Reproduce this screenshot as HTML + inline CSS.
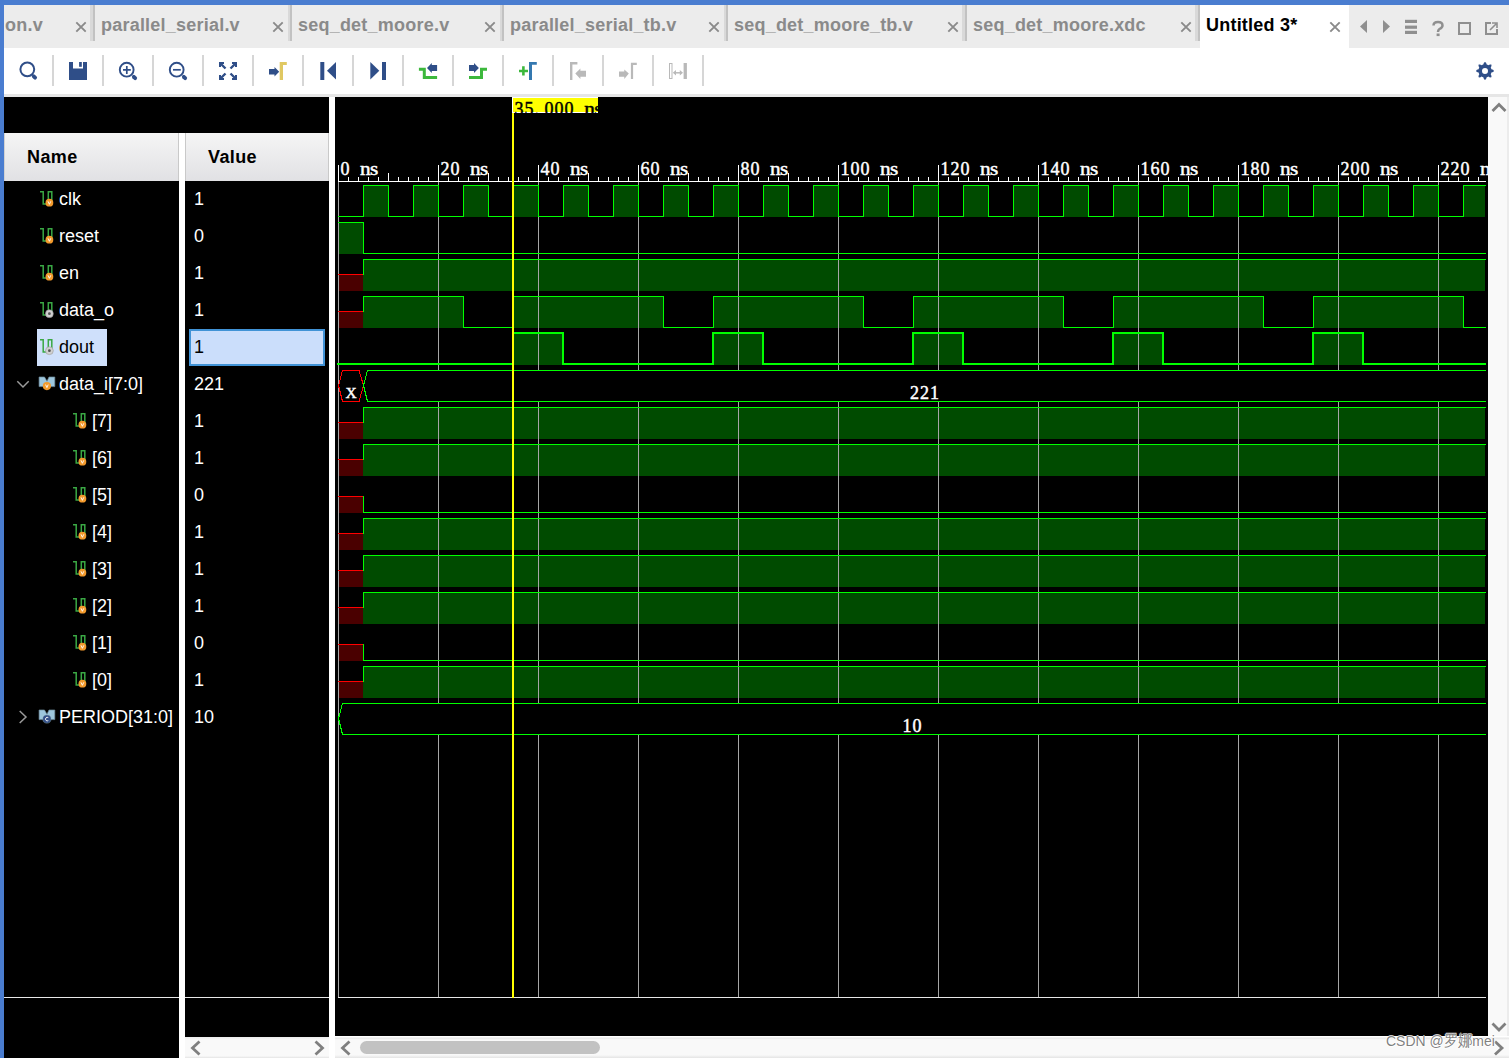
<!DOCTYPE html><html><head><meta charset="utf-8"><style>
*{margin:0;padding:0;box-sizing:border-box}
html,body{width:1509px;height:1058px;overflow:hidden;background:#4a7dd0}
body{position:relative;font-family:"Liberation Sans",sans-serif}
.a{position:absolute}
.tab{position:absolute;top:5px;height:43px;font-weight:bold;font-size:18px;letter-spacing:0.22px;color:#8a8a8a;white-space:nowrap}
.sep{position:absolute;top:5px;height:36px}
.tsep{position:absolute;top:55px;width:2px;height:31px;background:#d6d6d6}
.nm{position:absolute;color:#fff;font-size:18px;white-space:nowrap;line-height:20px}
.vl{position:absolute;left:194px;color:#fff;font-size:18px;white-space:nowrap;line-height:20px}
</style></head><body>
<div class="a" style="left:4px;top:5px;width:1505px;height:43px;background:#ececec"></div>
<div class="a" style="left:1200px;top:5px;width:149px;height:43px;background:#fff"></div>
<div class="tab" style="left:5px;line-height:40px">on.v</div>
<svg class="a" style="left:75px;top:21px" width="12" height="12"><path d="M1.3 1.3L10.7 10.7M10.7 1.3L1.3 10.7" stroke="#8a8a8a" stroke-width="1.9"/></svg>
<div class="sep" style="left:90px;width:5px;background:linear-gradient(90deg,#d9d9d9 3px,#c2c2c2 3px)"></div>
<div class="tab" style="left:101px;line-height:40px">parallel_serial.v</div>
<svg class="a" style="left:272px;top:21px" width="12" height="12"><path d="M1.3 1.3L10.7 10.7M10.7 1.3L1.3 10.7" stroke="#8a8a8a" stroke-width="1.9"/></svg>
<div class="sep" style="left:288px;width:4px;background:linear-gradient(90deg,#d9d9d9 2px,#c2c2c2 2px)"></div>
<div class="tab" style="left:298px;line-height:40px">seq_det_moore.v</div>
<svg class="a" style="left:484px;top:21px" width="12" height="12"><path d="M1.3 1.3L10.7 10.7M10.7 1.3L1.3 10.7" stroke="#8a8a8a" stroke-width="1.9"/></svg>
<div class="sep" style="left:500px;width:4px;background:linear-gradient(90deg,#d9d9d9 2px,#c2c2c2 2px)"></div>
<div class="tab" style="left:510px;line-height:40px">parallel_serial_tb.v</div>
<svg class="a" style="left:708px;top:21px" width="12" height="12"><path d="M1.3 1.3L10.7 10.7M10.7 1.3L1.3 10.7" stroke="#8a8a8a" stroke-width="1.9"/></svg>
<div class="sep" style="left:724px;width:4px;background:linear-gradient(90deg,#d9d9d9 2px,#c2c2c2 2px)"></div>
<div class="tab" style="left:734px;line-height:40px">seq_det_moore_tb.v</div>
<svg class="a" style="left:947px;top:21px" width="12" height="12"><path d="M1.3 1.3L10.7 10.7M10.7 1.3L1.3 10.7" stroke="#8a8a8a" stroke-width="1.9"/></svg>
<div class="sep" style="left:962px;width:5px;background:linear-gradient(90deg,#d9d9d9 3px,#c2c2c2 3px)"></div>
<div class="tab" style="left:973px;line-height:40px">seq_det_moore.xdc</div>
<svg class="a" style="left:1180px;top:21px" width="12" height="12"><path d="M1.3 1.3L10.7 10.7M10.7 1.3L1.3 10.7" stroke="#8a8a8a" stroke-width="1.9"/></svg>
<div class="sep" style="left:1195px;width:5px;background:linear-gradient(90deg,#d9d9d9 3px,#c2c2c2 3px)"></div>
<div class="tab" style="left:1206px;line-height:40px;color:#000">Untitled 3*</div>
<svg class="a" style="left:1329px;top:21px" width="12" height="12"><path d="M1.3 1.3L10.7 10.7M10.7 1.3L1.3 10.7" stroke="#8a8a8a" stroke-width="1.9"/></svg>
<svg class="a" style="left:1350px;top:5px" width="159" height="43"><path d="M17 15L10 21.5L17 28Z" fill="#8f8f8f"/><path d="M33 15L40 21.5L33 28Z" fill="#8f8f8f"/><rect x="55" y="14.8" width="12" height="3.2" fill="#8f8f8f"/><rect x="55" y="20.6" width="12" height="3.2" fill="#8f8f8f"/><rect x="55" y="25.8" width="12" height="3.2" fill="#8f8f8f"/><path d="M83.5 20.5Q83.5 17 88 17Q92.5 17 92.5 20.5Q92.5 22.5 89.5 24Q88 25 88 27" stroke="#8f8f8f" stroke-width="2.5" fill="none"/><rect x="86.6" y="28.5" width="3" height="2.6" fill="#8f8f8f"/><rect x="109" y="18" width="11" height="11" stroke="#8f8f8f" stroke-width="2" fill="none"/><path d="M141 18H136V29H147V24" stroke="#8f8f8f" stroke-width="2" fill="none"/><path d="M140 25L146 19M142 18H147V23" stroke="#8f8f8f" stroke-width="1.6" fill="none"/></svg>
<div class="a" style="left:4px;top:48px;width:1505px;height:46px;background:#fff"></div>
<div class="a" style="left:4px;top:94px;width:1505px;height:3px;background:#e6e6e6"></div>
<div class="tsep" style="left:52px"></div>
<div class="tsep" style="left:102px"></div>
<div class="tsep" style="left:152px"></div>
<div class="tsep" style="left:202px"></div>
<div class="tsep" style="left:252px"></div>
<div class="tsep" style="left:302px"></div>
<div class="tsep" style="left:352px"></div>
<div class="tsep" style="left:402px"></div>
<div class="tsep" style="left:452px"></div>
<div class="tsep" style="left:502px"></div>
<div class="tsep" style="left:552px"></div>
<div class="tsep" style="left:602px"></div>
<div class="tsep" style="left:652px"></div>
<div class="tsep" style="left:702px"></div>
<svg class="a" style="left:0;top:0" width="1509" height="97"><circle cx="27.3" cy="69.3" r="6.9" stroke="#2f4e88" stroke-width="2" fill="none"/><path d="M33.7 76.3L35.1 77.7" stroke="#2f4e88" stroke-width="3.8" stroke-linecap="round"/><path d="M69 62H73V68.6H83V62H87V80H69Z" fill="#2f4e88"/><rect x="79.1" y="62" width="2.7" height="4.8" fill="#2f4e88"/><circle cx="126.7" cy="69.7" r="6.9" stroke="#2f4e88" stroke-width="1.9" fill="none"/><path d="M123 69.8H130.8M126.8 66V73.9" stroke="#2f4e88" stroke-width="1.7"/><path d="M133.8 76.8L135.2 78.2" stroke="#2f4e88" stroke-width="3.8" stroke-linecap="round"/><circle cx="176.7" cy="69.7" r="6.9" stroke="#2f4e88" stroke-width="1.9" fill="none"/><path d="M173 69.8H180.8" stroke="#2f4e88" stroke-width="1.7"/><path d="M183.8 76.8L185.2 78.2" stroke="#2f4e88" stroke-width="3.8" stroke-linecap="round"/><g fill="#2f4e88"><path d="M219 62H224V64H221V67H219Z"/><path d="M237 62H232V64H235V67H237Z"/><path d="M219 80H224V78H221V75H219Z"/><path d="M237 80H232V78H235V75H237Z"/></g><path d="M220.5 63.5L225.5 68.5M235.5 63.5L230.5 68.5M220.5 78.5L225.5 73.5M235.5 78.5L230.5 73.5" stroke="#2f4e88" stroke-width="2.4"/><path d="M269 69H274.5V67L279.2 71.7L274.5 76.5V74.6H269Z" fill="#2f4e88"/><path d="M279.7 62H286.8V65H283V80H279.7Z" fill="#e0c862"/><rect x="320.3" y="62" width="4" height="18" fill="#2f4e88"/><path d="M336 62V79.5L327 70.8Z" fill="#2f4e88"/><rect x="382" y="62" width="4" height="18" fill="#2f4e88"/><path d="M370.3 62V79.5L379.3 70.8Z" fill="#2f4e88"/><path d="M418.9 67.8H425.8V75.9H437.1V78.9H422.8V70.8H418.9Z" fill="#3cb83c"/><path d="M427 67.9L431.8 63V65.1H437.1V71H431.8V72.9Z" fill="#2f4e88"/><path d="M487 67.8H480V75.9H469V78.9H483V70.8H487Z" fill="#3cb83c"/><path d="M478.9 67.9L474 63V65.1H469V71H474V72.9Z" fill="#2f4e88"/><path d="M519 71H528M523.4 66.3V75.6" stroke="#3cb83c" stroke-width="2.6"/><path d="M529 62H536.8V64.8H532V80H529Z" fill="#3478b0"/><path d="M570 62H577.4V64.6H572.4V80H570Z" fill="#b9b9b9"/><path d="M575.3 73.5L580.4 68.4V70.8H586V76.8H580.4V78.9Z" fill="#b9b9b9"/><path d="M630.9 62.8H636.8V65H633.1V79.1H630.9Z" fill="#b9b9b9"/><path d="M628.8 73.6L624.3 69.6V71.4H619V76.8H624.3V78.9Z" fill="#b9b9b9"/><rect x="669.5" y="63.5" width="2.5" height="15" stroke="#b9b9b9" stroke-width="1" fill="none"/><rect x="683.6" y="63" width="3.3" height="16" fill="#b9b9b9"/><path d="M675 72.8H681" stroke="#b9b9b9" stroke-width="1.5"/><path d="M672.8 72.8L676 70V75.6Z M683 72.8L679.8 70V75.6Z" fill="#b9b9b9"/><path d="M1485.00,61.90 L1486.07,62.77 L1486.71,64.52 L1487.53,64.80 L1488.30,65.18 L1489.99,64.39 L1491.36,64.54 L1491.51,65.91 L1490.72,67.60 L1491.10,68.37 L1491.38,69.19 L1493.13,69.83 L1494.00,70.90 L1493.13,71.97 L1491.38,72.61 L1491.10,73.43 L1490.72,74.20 L1491.51,75.89 L1491.36,77.26 L1489.99,77.41 L1488.30,76.62 L1487.53,77.00 L1486.71,77.28 L1486.07,79.03 L1485.00,79.90 L1483.93,79.03 L1483.29,77.28 L1482.47,77.00 L1481.70,76.62 L1480.01,77.41 L1478.64,77.26 L1478.49,75.89 L1479.28,74.20 L1478.90,73.43 L1478.62,72.61 L1476.87,71.97 L1476.00,70.90 L1476.87,69.83 L1478.62,69.19 L1478.90,68.37 L1479.28,67.60 L1478.49,65.91 L1478.64,64.54 L1480.01,64.39 L1481.70,65.18 L1482.47,64.80 L1483.29,64.52 L1483.93,62.77Z M1488 70.9A3 3 0 1 0 1482 70.9A3 3 0 1 0 1488 70.9Z" fill="#2f4e88" fill-rule="evenodd"/></svg>
<div class="a" style="left:4px;top:97px;width:175px;height:961px;background:#000"></div>
<div class="a" style="left:179px;top:97px;width:6px;height:36px;background:#000"></div>
<div class="a" style="left:179px;top:133px;width:6px;height:925px;background:#fff"></div>
<div class="a" style="left:185px;top:97px;width:144px;height:940px;background:#000"></div>
<div class="a" style="left:329px;top:97px;width:6px;height:961px;background:#fff"></div>
<div class="a" style="left:335px;top:97px;width:1153px;height:939px;background:#000"></div>
<div class="a" style="left:4px;top:133px;width:175px;height:48px;background:linear-gradient(#f5f5f5,#e1e1e4);border-right:1px solid #c9c9c9;border-left:1px solid #d2d2d2"></div>
<div class="a" style="left:185px;top:133px;width:144px;height:48px;background:linear-gradient(#f5f5f5,#e1e1e4);border-right:1px solid #c9c9c9;border-left:1px solid #c9c9c9"></div>
<div class="a" style="left:27px;top:147px;font-weight:bold;font-size:18px;line-height:20px;letter-spacing:0.4px;color:#000">Name</div>
<div class="a" style="left:208px;top:147px;font-weight:bold;font-size:18px;line-height:20px;letter-spacing:0.4px;color:#000">Value</div>
<div class="a" style="left:4px;top:997px;width:175px;height:1px;background:#e8e8e8"></div>
<div class="a" style="left:185px;top:997px;width:144px;height:1px;background:#e8e8e8"></div>
<div class="a" style="left:185px;top:1037px;width:144px;height:21px;background:linear-gradient(#ececec,#f9f9f9 3px,#f9f9f9 19px,#e4e4e4)"></div>
<div class="a" style="left:335px;top:1036px;width:1153px;height:22px;background:linear-gradient(#fff,#fff 1px,#e6e6e6 2px,#f9f9f9 4px,#f9f9f9 19px,#e4e4e4)"></div>
<div class="a" style="left:1488px;top:97px;width:21px;height:939px;background:linear-gradient(90deg,#f9f9f9 19px,#ececec 19px)"></div>
<div class="a" style="left:1488px;top:1036px;width:21px;height:22px;background:linear-gradient(#fff,#fff 1px,#e6e6e6 2px,#f9f9f9 4px,#f9f9f9 19px,#e4e4e4)"></div>
<div class="a" style="left:360px;top:1041px;width:240px;height:13px;border-radius:6.5px;background:#c2c2c2"></div>
<svg class="a" style="left:0;top:1020px" width="1509" height="38"><path d="M199.5 21.5L192.5 28L199.5 34.5" stroke="#7f7f7f" stroke-width="2.8" fill="none"/><path d="M315.5 21.5L322.5 28L315.5 34.5" stroke="#7f7f7f" stroke-width="2.8" fill="none"/><path d="M349.5 21.5L342.5 28L349.5 34.5" stroke="#7f7f7f" stroke-width="2.8" fill="none"/><path d="M1495 21.5L1502 28L1495 34.5" stroke="#7f7f7f" stroke-width="2.8" fill="none"/><path d="M1492.5 3.5L1499 10L1505.5 3.5" stroke="#7f7f7f" stroke-width="2.8" fill="none"/></svg>
<svg class="a" style="left:1488px;top:97px" width="21" height="20"><path d="M4.5 14L11 7.5L17.5 14" stroke="#7f7f7f" stroke-width="2.8" fill="none"/></svg>
<div class="nm" style="left:59px;top:189px;color:#fff">clk</div>
<div class="vl" style="top:189px;color:#fff">1</div>
<div class="nm" style="left:59px;top:226px;color:#fff">reset</div>
<div class="vl" style="top:226px;color:#fff">0</div>
<div class="nm" style="left:59px;top:263px;color:#fff">en</div>
<div class="vl" style="top:263px;color:#fff">1</div>
<div class="nm" style="left:59px;top:300px;color:#fff">data_o</div>
<div class="vl" style="top:300px;color:#fff">1</div>
<div class="a" style="left:37px;top:329px;width:70px;height:37px;background:#cfe0fb"></div>
<div class="a" style="left:189px;top:329px;width:136px;height:37px;background:#cbdefb;border:2px solid #4193d6"></div>
<div class="nm" style="left:59px;top:337px;color:#000">dout</div>
<div class="vl" style="top:337px;color:#000">1</div>
<div class="nm" style="left:59px;top:374px;color:#fff">data_i[7:0]</div>
<div class="vl" style="top:374px;color:#fff">221</div>
<div class="nm" style="left:92px;top:411px;color:#fff">[7]</div>
<div class="vl" style="top:411px;color:#fff">1</div>
<div class="nm" style="left:92px;top:448px;color:#fff">[6]</div>
<div class="vl" style="top:448px;color:#fff">1</div>
<div class="nm" style="left:92px;top:485px;color:#fff">[5]</div>
<div class="vl" style="top:485px;color:#fff">0</div>
<div class="nm" style="left:92px;top:522px;color:#fff">[4]</div>
<div class="vl" style="top:522px;color:#fff">1</div>
<div class="nm" style="left:92px;top:559px;color:#fff">[3]</div>
<div class="vl" style="top:559px;color:#fff">1</div>
<div class="nm" style="left:92px;top:596px;color:#fff">[2]</div>
<div class="vl" style="top:596px;color:#fff">1</div>
<div class="nm" style="left:92px;top:633px;color:#fff">[1]</div>
<div class="vl" style="top:633px;color:#fff">0</div>
<div class="nm" style="left:92px;top:670px;color:#fff">[0]</div>
<div class="vl" style="top:670px;color:#fff">1</div>
<div class="nm" style="left:59px;top:707px;color:#fff">PERIOD[31:0]</div>
<div class="vl" style="top:707px;color:#fff">10</div>
<svg class="a" style="left:0;top:0" width="180" height="1058"><path d="M40 191.8H43.2V204H48.3V191.8H51.8V202" stroke="#3aa844" stroke-width="1.5" fill="none"/><circle cx="49.4" cy="202.7" r="3.9" fill="#f39a2c"/><path d="M48 201.3L49.4 204.3L50.8 201.3" stroke="#fff" stroke-width="0.9" fill="none"/><path d="M40 228.8H43.2V241H48.3V228.8H51.8V239" stroke="#3aa844" stroke-width="1.5" fill="none"/><circle cx="49.4" cy="239.7" r="3.9" fill="#f39a2c"/><path d="M48 238.3L49.4 241.3L50.8 238.3" stroke="#fff" stroke-width="0.9" fill="none"/><path d="M40 265.8H43.2V278H48.3V265.8H51.8V276" stroke="#3aa844" stroke-width="1.5" fill="none"/><circle cx="49.4" cy="276.7" r="3.9" fill="#f39a2c"/><path d="M48 275.3L49.4 278.3L50.8 275.3" stroke="#fff" stroke-width="0.9" fill="none"/><path d="M40 302.8H43.2V315H48.3V302.8H51.8V313" stroke="#3aa844" stroke-width="1.5" fill="none"/><circle cx="49.4" cy="313.7" r="3.9" fill="#d0d0d0" stroke="#9a9a9a" stroke-width="0.6"/><circle cx="49.4" cy="313.7" r="1.4" fill="#555"/><path d="M40 339.8H43.2V352H48.3V339.8H51.8V350" stroke="#3aa844" stroke-width="1.5" fill="none"/><circle cx="49.4" cy="350.7" r="3.9" fill="#d0d0d0" stroke="#9a9a9a" stroke-width="0.6"/><circle cx="49.4" cy="350.7" r="1.4" fill="#555"/><path d="M39.1 377H44.5L47 381.3L49 377H54.8V386.6H39.1Z" fill="#9dc6dd" stroke="#6f8c9c" stroke-width="0.7"/><circle cx="46.9" cy="386.1" r="4.1" fill="#f39a2c"/><path d="M45.6 384.6L46.9 387.6L48.2 384.6" stroke="#fff" stroke-width="0.9" fill="none"/><path d="M17.3 381.2L23 387L28.7 381.2" stroke="#9a9a9a" stroke-width="1.5" fill="none"/><path d="M73 413.8H76.2V426H81.3V413.8H84.8V424" stroke="#3aa844" stroke-width="1.5" fill="none"/><circle cx="82.4" cy="424.7" r="3.9" fill="#f39a2c"/><path d="M81 423.3L82.4 426.3L83.8 423.3" stroke="#fff" stroke-width="0.9" fill="none"/><path d="M73 450.8H76.2V463H81.3V450.8H84.8V461" stroke="#3aa844" stroke-width="1.5" fill="none"/><circle cx="82.4" cy="461.7" r="3.9" fill="#f39a2c"/><path d="M81 460.3L82.4 463.3L83.8 460.3" stroke="#fff" stroke-width="0.9" fill="none"/><path d="M73 487.8H76.2V500H81.3V487.8H84.8V498" stroke="#3aa844" stroke-width="1.5" fill="none"/><circle cx="82.4" cy="498.7" r="3.9" fill="#f39a2c"/><path d="M81 497.3L82.4 500.3L83.8 497.3" stroke="#fff" stroke-width="0.9" fill="none"/><path d="M73 524.8H76.2V537H81.3V524.8H84.8V535" stroke="#3aa844" stroke-width="1.5" fill="none"/><circle cx="82.4" cy="535.7" r="3.9" fill="#f39a2c"/><path d="M81 534.3L82.4 537.3L83.8 534.3" stroke="#fff" stroke-width="0.9" fill="none"/><path d="M73 561.8H76.2V574H81.3V561.8H84.8V572" stroke="#3aa844" stroke-width="1.5" fill="none"/><circle cx="82.4" cy="572.7" r="3.9" fill="#f39a2c"/><path d="M81 571.3L82.4 574.3L83.8 571.3" stroke="#fff" stroke-width="0.9" fill="none"/><path d="M73 598.8H76.2V611H81.3V598.8H84.8V609" stroke="#3aa844" stroke-width="1.5" fill="none"/><circle cx="82.4" cy="609.7" r="3.9" fill="#f39a2c"/><path d="M81 608.3L82.4 611.3L83.8 608.3" stroke="#fff" stroke-width="0.9" fill="none"/><path d="M73 635.8H76.2V648H81.3V635.8H84.8V646" stroke="#3aa844" stroke-width="1.5" fill="none"/><circle cx="82.4" cy="646.7" r="3.9" fill="#f39a2c"/><path d="M81 645.3L82.4 648.3L83.8 645.3" stroke="#fff" stroke-width="0.9" fill="none"/><path d="M73 672.8H76.2V685H81.3V672.8H84.8V683" stroke="#3aa844" stroke-width="1.5" fill="none"/><circle cx="82.4" cy="683.7" r="3.9" fill="#f39a2c"/><path d="M81 682.3L82.4 685.3L83.8 682.3" stroke="#fff" stroke-width="0.9" fill="none"/><path d="M39.1 710H44.5L47 714.3L49 710H54.8V719.6H39.1Z" fill="#9dc6dd" stroke="#6f8c9c" stroke-width="0.7"/><circle cx="46.9" cy="719.1" r="4.1" fill="#34508a" stroke="#8aa" stroke-width="0.4"/><path d="M48.3 717.6A1.8 1.8 0 1 0 48.3 720.6" stroke="#fff" stroke-width="0.9" fill="none"/><path d="M19.7 711L26 717L19.7 723" stroke="#9a9a9a" stroke-width="1.5" fill="none"/></svg>
<svg class="a" style="left:0;top:0" width="1488" height="1036" shape-rendering="crispEdges"><defs><clipPath id="wc"><rect x="335" y="97" width="1153" height="939"/></clipPath></defs><g clip-path="url(#wc)"><rect x="363" y="185" width="25" height="32" fill="#004b00"/><rect x="413" y="185" width="25" height="32" fill="#004b00"/><rect x="463" y="185" width="25" height="32" fill="#004b00"/><rect x="513" y="185" width="25" height="32" fill="#004b00"/><rect x="563" y="185" width="25" height="32" fill="#004b00"/><rect x="613" y="185" width="25" height="32" fill="#004b00"/><rect x="663" y="185" width="25" height="32" fill="#004b00"/><rect x="713" y="185" width="25" height="32" fill="#004b00"/><rect x="763" y="185" width="25" height="32" fill="#004b00"/><rect x="813" y="185" width="25" height="32" fill="#004b00"/><rect x="863" y="185" width="25" height="32" fill="#004b00"/><rect x="913" y="185" width="25" height="32" fill="#004b00"/><rect x="963" y="185" width="25" height="32" fill="#004b00"/><rect x="1013" y="185" width="25" height="32" fill="#004b00"/><rect x="1063" y="185" width="25" height="32" fill="#004b00"/><rect x="1113" y="185" width="25" height="32" fill="#004b00"/><rect x="1163" y="185" width="25" height="32" fill="#004b00"/><rect x="1213" y="185" width="25" height="32" fill="#004b00"/><rect x="1263" y="185" width="25" height="32" fill="#004b00"/><rect x="1313" y="185" width="25" height="32" fill="#004b00"/><rect x="1363" y="185" width="25" height="32" fill="#004b00"/><rect x="1413" y="185" width="25" height="32" fill="#004b00"/><rect x="1463" y="185" width="22" height="32" fill="#004b00"/><rect x="338" y="222" width="25" height="32" fill="#004b00"/><rect x="338" y="275" width="25" height="16" fill="#4a0000"/><rect x="363" y="259" width="1122" height="32" fill="#004b00"/><rect x="338" y="312" width="25" height="16" fill="#4a0000"/><rect x="363" y="296" width="100" height="32" fill="#004b00"/><rect x="513" y="296" width="150" height="32" fill="#004b00"/><rect x="713" y="296" width="150" height="32" fill="#004b00"/><rect x="913" y="296" width="150" height="32" fill="#004b00"/><rect x="1113" y="296" width="150" height="32" fill="#004b00"/><rect x="1313" y="296" width="150" height="32" fill="#004b00"/><rect x="513" y="333" width="50" height="32" fill="#004b00"/><rect x="713" y="333" width="50" height="32" fill="#004b00"/><rect x="913" y="333" width="50" height="32" fill="#004b00"/><rect x="1113" y="333" width="50" height="32" fill="#004b00"/><rect x="1313" y="333" width="50" height="32" fill="#004b00"/><rect x="338" y="423" width="25" height="16" fill="#4a0000"/><rect x="363" y="407" width="1122" height="32" fill="#004b00"/><rect x="338" y="460" width="25" height="16" fill="#4a0000"/><rect x="363" y="444" width="1122" height="32" fill="#004b00"/><rect x="338" y="497" width="25" height="16" fill="#4a0000"/><rect x="338" y="534" width="25" height="16" fill="#4a0000"/><rect x="363" y="518" width="1122" height="32" fill="#004b00"/><rect x="338" y="571" width="25" height="16" fill="#4a0000"/><rect x="363" y="555" width="1122" height="32" fill="#004b00"/><rect x="338" y="608" width="25" height="16" fill="#4a0000"/><rect x="363" y="592" width="1122" height="32" fill="#004b00"/><rect x="338" y="645" width="25" height="16" fill="#4a0000"/><rect x="338" y="682" width="25" height="16" fill="#4a0000"/><rect x="363" y="666" width="1122" height="32" fill="#004b00"/><path d="M338.5 181V997" stroke="#a6a6a6" stroke-width="1"/><path d="M438.5 181V997" stroke="#a6a6a6" stroke-width="1"/><path d="M538.5 181V997" stroke="#a6a6a6" stroke-width="1"/><path d="M638.5 181V997" stroke="#a6a6a6" stroke-width="1"/><path d="M738.5 181V997" stroke="#a6a6a6" stroke-width="1"/><path d="M838.5 181V997" stroke="#a6a6a6" stroke-width="1"/><path d="M938.5 181V997" stroke="#a6a6a6" stroke-width="1"/><path d="M1038.5 181V997" stroke="#a6a6a6" stroke-width="1"/><path d="M1138.5 181V997" stroke="#a6a6a6" stroke-width="1"/><path d="M1238.5 181V997" stroke="#a6a6a6" stroke-width="1"/><path d="M1338.5 181V997" stroke="#a6a6a6" stroke-width="1"/><path d="M1438.5 181V997" stroke="#a6a6a6" stroke-width="1"/><path d="M338 997.5H1486" stroke="#e6e6e6" stroke-width="1"/><path d="M338.5 385.5L342.5 370.5H359L363.5 385.5L359 401.5H342.5Z" fill="#000" stroke="#ff0000" stroke-width="1"/><path d="M363.5 385.5L367.5 370.5H1486V401.5H367.5Z" fill="#000"/><path d="M1486 370.5H367.5L363.5 385.5L367.5 401.5H1486" fill="none" stroke="#00ff00" stroke-width="1"/><path d="M338.5 718.5L342.5 703.5H1486V734.5H342.5Z" fill="#000"/><path d="M1486 703.5H342.5L338.5 718.5L342.5 734.5H1486" fill="none" stroke="#00ff00" stroke-width="1"/><path d="M338 216.5H363" stroke="#00ff00" stroke-width="1" stroke-linecap="square"/><path d="M363 185.5H388" stroke="#00ff00" stroke-width="1" stroke-linecap="square"/><path d="M363.5 216.5V185.5" stroke="#00ff00" stroke-width="1" stroke-linecap="square"/><path d="M388 216.5H413" stroke="#00ff00" stroke-width="1" stroke-linecap="square"/><path d="M388.5 185.5V216.5" stroke="#00ff00" stroke-width="1" stroke-linecap="square"/><path d="M413 185.5H438" stroke="#00ff00" stroke-width="1" stroke-linecap="square"/><path d="M413.5 216.5V185.5" stroke="#00ff00" stroke-width="1" stroke-linecap="square"/><path d="M438 216.5H463" stroke="#00ff00" stroke-width="1" stroke-linecap="square"/><path d="M438.5 185.5V216.5" stroke="#00ff00" stroke-width="1" stroke-linecap="square"/><path d="M463 185.5H488" stroke="#00ff00" stroke-width="1" stroke-linecap="square"/><path d="M463.5 216.5V185.5" stroke="#00ff00" stroke-width="1" stroke-linecap="square"/><path d="M488 216.5H513" stroke="#00ff00" stroke-width="1" stroke-linecap="square"/><path d="M488.5 185.5V216.5" stroke="#00ff00" stroke-width="1" stroke-linecap="square"/><path d="M513 185.5H538" stroke="#00ff00" stroke-width="1" stroke-linecap="square"/><path d="M513.5 216.5V185.5" stroke="#00ff00" stroke-width="1" stroke-linecap="square"/><path d="M538 216.5H563" stroke="#00ff00" stroke-width="1" stroke-linecap="square"/><path d="M538.5 185.5V216.5" stroke="#00ff00" stroke-width="1" stroke-linecap="square"/><path d="M563 185.5H588" stroke="#00ff00" stroke-width="1" stroke-linecap="square"/><path d="M563.5 216.5V185.5" stroke="#00ff00" stroke-width="1" stroke-linecap="square"/><path d="M588 216.5H613" stroke="#00ff00" stroke-width="1" stroke-linecap="square"/><path d="M588.5 185.5V216.5" stroke="#00ff00" stroke-width="1" stroke-linecap="square"/><path d="M613 185.5H638" stroke="#00ff00" stroke-width="1" stroke-linecap="square"/><path d="M613.5 216.5V185.5" stroke="#00ff00" stroke-width="1" stroke-linecap="square"/><path d="M638 216.5H663" stroke="#00ff00" stroke-width="1" stroke-linecap="square"/><path d="M638.5 185.5V216.5" stroke="#00ff00" stroke-width="1" stroke-linecap="square"/><path d="M663 185.5H688" stroke="#00ff00" stroke-width="1" stroke-linecap="square"/><path d="M663.5 216.5V185.5" stroke="#00ff00" stroke-width="1" stroke-linecap="square"/><path d="M688 216.5H713" stroke="#00ff00" stroke-width="1" stroke-linecap="square"/><path d="M688.5 185.5V216.5" stroke="#00ff00" stroke-width="1" stroke-linecap="square"/><path d="M713 185.5H738" stroke="#00ff00" stroke-width="1" stroke-linecap="square"/><path d="M713.5 216.5V185.5" stroke="#00ff00" stroke-width="1" stroke-linecap="square"/><path d="M738 216.5H763" stroke="#00ff00" stroke-width="1" stroke-linecap="square"/><path d="M738.5 185.5V216.5" stroke="#00ff00" stroke-width="1" stroke-linecap="square"/><path d="M763 185.5H788" stroke="#00ff00" stroke-width="1" stroke-linecap="square"/><path d="M763.5 216.5V185.5" stroke="#00ff00" stroke-width="1" stroke-linecap="square"/><path d="M788 216.5H813" stroke="#00ff00" stroke-width="1" stroke-linecap="square"/><path d="M788.5 185.5V216.5" stroke="#00ff00" stroke-width="1" stroke-linecap="square"/><path d="M813 185.5H838" stroke="#00ff00" stroke-width="1" stroke-linecap="square"/><path d="M813.5 216.5V185.5" stroke="#00ff00" stroke-width="1" stroke-linecap="square"/><path d="M838 216.5H863" stroke="#00ff00" stroke-width="1" stroke-linecap="square"/><path d="M838.5 185.5V216.5" stroke="#00ff00" stroke-width="1" stroke-linecap="square"/><path d="M863 185.5H888" stroke="#00ff00" stroke-width="1" stroke-linecap="square"/><path d="M863.5 216.5V185.5" stroke="#00ff00" stroke-width="1" stroke-linecap="square"/><path d="M888 216.5H913" stroke="#00ff00" stroke-width="1" stroke-linecap="square"/><path d="M888.5 185.5V216.5" stroke="#00ff00" stroke-width="1" stroke-linecap="square"/><path d="M913 185.5H938" stroke="#00ff00" stroke-width="1" stroke-linecap="square"/><path d="M913.5 216.5V185.5" stroke="#00ff00" stroke-width="1" stroke-linecap="square"/><path d="M938 216.5H963" stroke="#00ff00" stroke-width="1" stroke-linecap="square"/><path d="M938.5 185.5V216.5" stroke="#00ff00" stroke-width="1" stroke-linecap="square"/><path d="M963 185.5H988" stroke="#00ff00" stroke-width="1" stroke-linecap="square"/><path d="M963.5 216.5V185.5" stroke="#00ff00" stroke-width="1" stroke-linecap="square"/><path d="M988 216.5H1013" stroke="#00ff00" stroke-width="1" stroke-linecap="square"/><path d="M988.5 185.5V216.5" stroke="#00ff00" stroke-width="1" stroke-linecap="square"/><path d="M1013 185.5H1038" stroke="#00ff00" stroke-width="1" stroke-linecap="square"/><path d="M1013.5 216.5V185.5" stroke="#00ff00" stroke-width="1" stroke-linecap="square"/><path d="M1038 216.5H1063" stroke="#00ff00" stroke-width="1" stroke-linecap="square"/><path d="M1038.5 185.5V216.5" stroke="#00ff00" stroke-width="1" stroke-linecap="square"/><path d="M1063 185.5H1088" stroke="#00ff00" stroke-width="1" stroke-linecap="square"/><path d="M1063.5 216.5V185.5" stroke="#00ff00" stroke-width="1" stroke-linecap="square"/><path d="M1088 216.5H1113" stroke="#00ff00" stroke-width="1" stroke-linecap="square"/><path d="M1088.5 185.5V216.5" stroke="#00ff00" stroke-width="1" stroke-linecap="square"/><path d="M1113 185.5H1138" stroke="#00ff00" stroke-width="1" stroke-linecap="square"/><path d="M1113.5 216.5V185.5" stroke="#00ff00" stroke-width="1" stroke-linecap="square"/><path d="M1138 216.5H1163" stroke="#00ff00" stroke-width="1" stroke-linecap="square"/><path d="M1138.5 185.5V216.5" stroke="#00ff00" stroke-width="1" stroke-linecap="square"/><path d="M1163 185.5H1188" stroke="#00ff00" stroke-width="1" stroke-linecap="square"/><path d="M1163.5 216.5V185.5" stroke="#00ff00" stroke-width="1" stroke-linecap="square"/><path d="M1188 216.5H1213" stroke="#00ff00" stroke-width="1" stroke-linecap="square"/><path d="M1188.5 185.5V216.5" stroke="#00ff00" stroke-width="1" stroke-linecap="square"/><path d="M1213 185.5H1238" stroke="#00ff00" stroke-width="1" stroke-linecap="square"/><path d="M1213.5 216.5V185.5" stroke="#00ff00" stroke-width="1" stroke-linecap="square"/><path d="M1238 216.5H1263" stroke="#00ff00" stroke-width="1" stroke-linecap="square"/><path d="M1238.5 185.5V216.5" stroke="#00ff00" stroke-width="1" stroke-linecap="square"/><path d="M1263 185.5H1288" stroke="#00ff00" stroke-width="1" stroke-linecap="square"/><path d="M1263.5 216.5V185.5" stroke="#00ff00" stroke-width="1" stroke-linecap="square"/><path d="M1288 216.5H1313" stroke="#00ff00" stroke-width="1" stroke-linecap="square"/><path d="M1288.5 185.5V216.5" stroke="#00ff00" stroke-width="1" stroke-linecap="square"/><path d="M1313 185.5H1338" stroke="#00ff00" stroke-width="1" stroke-linecap="square"/><path d="M1313.5 216.5V185.5" stroke="#00ff00" stroke-width="1" stroke-linecap="square"/><path d="M1338 216.5H1363" stroke="#00ff00" stroke-width="1" stroke-linecap="square"/><path d="M1338.5 185.5V216.5" stroke="#00ff00" stroke-width="1" stroke-linecap="square"/><path d="M1363 185.5H1388" stroke="#00ff00" stroke-width="1" stroke-linecap="square"/><path d="M1363.5 216.5V185.5" stroke="#00ff00" stroke-width="1" stroke-linecap="square"/><path d="M1388 216.5H1413" stroke="#00ff00" stroke-width="1" stroke-linecap="square"/><path d="M1388.5 185.5V216.5" stroke="#00ff00" stroke-width="1" stroke-linecap="square"/><path d="M1413 185.5H1438" stroke="#00ff00" stroke-width="1" stroke-linecap="square"/><path d="M1413.5 216.5V185.5" stroke="#00ff00" stroke-width="1" stroke-linecap="square"/><path d="M1438 216.5H1463" stroke="#00ff00" stroke-width="1" stroke-linecap="square"/><path d="M1438.5 185.5V216.5" stroke="#00ff00" stroke-width="1" stroke-linecap="square"/><path d="M1463 185.5H1485" stroke="#00ff00" stroke-width="1" stroke-linecap="square"/><path d="M1463.5 216.5V185.5" stroke="#00ff00" stroke-width="1" stroke-linecap="square"/><path d="M338 222.5H363" stroke="#00ff00" stroke-width="1" stroke-linecap="square"/><path d="M363 253.5H1485" stroke="#00ff00" stroke-width="1" stroke-linecap="square"/><path d="M363.5 222.5V253.5" stroke="#00ff00" stroke-width="1" stroke-linecap="square"/><path d="M338 274.5H363" stroke="#ff0000" stroke-width="1"/><path d="M363 259.5H1485" stroke="#00ff00" stroke-width="1" stroke-linecap="square"/><path d="M363.5 274.5V259.5" stroke="#00ff00" stroke-width="1" stroke-linecap="square"/><path d="M338 311.5H363" stroke="#ff0000" stroke-width="1"/><path d="M363 296.5H463" stroke="#00ff00" stroke-width="1" stroke-linecap="square"/><path d="M363.5 311.5V296.5" stroke="#00ff00" stroke-width="1" stroke-linecap="square"/><path d="M463 327.5H513" stroke="#00ff00" stroke-width="1" stroke-linecap="square"/><path d="M463.5 296.5V327.5" stroke="#00ff00" stroke-width="1" stroke-linecap="square"/><path d="M513 296.5H663" stroke="#00ff00" stroke-width="1" stroke-linecap="square"/><path d="M513.5 327.5V296.5" stroke="#00ff00" stroke-width="1" stroke-linecap="square"/><path d="M663 327.5H713" stroke="#00ff00" stroke-width="1" stroke-linecap="square"/><path d="M663.5 296.5V327.5" stroke="#00ff00" stroke-width="1" stroke-linecap="square"/><path d="M713 296.5H863" stroke="#00ff00" stroke-width="1" stroke-linecap="square"/><path d="M713.5 327.5V296.5" stroke="#00ff00" stroke-width="1" stroke-linecap="square"/><path d="M863 327.5H913" stroke="#00ff00" stroke-width="1" stroke-linecap="square"/><path d="M863.5 296.5V327.5" stroke="#00ff00" stroke-width="1" stroke-linecap="square"/><path d="M913 296.5H1063" stroke="#00ff00" stroke-width="1" stroke-linecap="square"/><path d="M913.5 327.5V296.5" stroke="#00ff00" stroke-width="1" stroke-linecap="square"/><path d="M1063 327.5H1113" stroke="#00ff00" stroke-width="1" stroke-linecap="square"/><path d="M1063.5 296.5V327.5" stroke="#00ff00" stroke-width="1" stroke-linecap="square"/><path d="M1113 296.5H1263" stroke="#00ff00" stroke-width="1" stroke-linecap="square"/><path d="M1113.5 327.5V296.5" stroke="#00ff00" stroke-width="1" stroke-linecap="square"/><path d="M1263 327.5H1313" stroke="#00ff00" stroke-width="1" stroke-linecap="square"/><path d="M1263.5 296.5V327.5" stroke="#00ff00" stroke-width="1" stroke-linecap="square"/><path d="M1313 296.5H1463" stroke="#00ff00" stroke-width="1" stroke-linecap="square"/><path d="M1313.5 327.5V296.5" stroke="#00ff00" stroke-width="1" stroke-linecap="square"/><path d="M1463 327.5H1485" stroke="#00ff00" stroke-width="1" stroke-linecap="square"/><path d="M1463.5 296.5V327.5" stroke="#00ff00" stroke-width="1" stroke-linecap="square"/><path d="M338 364.0H513" stroke="#00ff00" stroke-width="2" stroke-linecap="square"/><path d="M513 333.0H563" stroke="#00ff00" stroke-width="2" stroke-linecap="square"/><path d="M513 364.0V333.0" stroke="#00ff00" stroke-width="2" stroke-linecap="square"/><path d="M563 364.0H713" stroke="#00ff00" stroke-width="2" stroke-linecap="square"/><path d="M563 333.0V364.0" stroke="#00ff00" stroke-width="2" stroke-linecap="square"/><path d="M713 333.0H763" stroke="#00ff00" stroke-width="2" stroke-linecap="square"/><path d="M713 364.0V333.0" stroke="#00ff00" stroke-width="2" stroke-linecap="square"/><path d="M763 364.0H913" stroke="#00ff00" stroke-width="2" stroke-linecap="square"/><path d="M763 333.0V364.0" stroke="#00ff00" stroke-width="2" stroke-linecap="square"/><path d="M913 333.0H963" stroke="#00ff00" stroke-width="2" stroke-linecap="square"/><path d="M913 364.0V333.0" stroke="#00ff00" stroke-width="2" stroke-linecap="square"/><path d="M963 364.0H1113" stroke="#00ff00" stroke-width="2" stroke-linecap="square"/><path d="M963 333.0V364.0" stroke="#00ff00" stroke-width="2" stroke-linecap="square"/><path d="M1113 333.0H1163" stroke="#00ff00" stroke-width="2" stroke-linecap="square"/><path d="M1113 364.0V333.0" stroke="#00ff00" stroke-width="2" stroke-linecap="square"/><path d="M1163 364.0H1313" stroke="#00ff00" stroke-width="2" stroke-linecap="square"/><path d="M1163 333.0V364.0" stroke="#00ff00" stroke-width="2" stroke-linecap="square"/><path d="M1313 333.0H1363" stroke="#00ff00" stroke-width="2" stroke-linecap="square"/><path d="M1313 364.0V333.0" stroke="#00ff00" stroke-width="2" stroke-linecap="square"/><path d="M1363 364.0H1485" stroke="#00ff00" stroke-width="2" stroke-linecap="square"/><path d="M1363 333.0V364.0" stroke="#00ff00" stroke-width="2" stroke-linecap="square"/><path d="M338 422.5H363" stroke="#ff0000" stroke-width="1"/><path d="M363 407.5H1485" stroke="#00ff00" stroke-width="1" stroke-linecap="square"/><path d="M363.5 422.5V407.5" stroke="#00ff00" stroke-width="1" stroke-linecap="square"/><path d="M338 459.5H363" stroke="#ff0000" stroke-width="1"/><path d="M363 444.5H1485" stroke="#00ff00" stroke-width="1" stroke-linecap="square"/><path d="M363.5 459.5V444.5" stroke="#00ff00" stroke-width="1" stroke-linecap="square"/><path d="M338 496.5H363" stroke="#ff0000" stroke-width="1"/><path d="M363 512.5H1485" stroke="#00ff00" stroke-width="1" stroke-linecap="square"/><path d="M363.5 496.5V512.5" stroke="#00ff00" stroke-width="1" stroke-linecap="square"/><path d="M338 533.5H363" stroke="#ff0000" stroke-width="1"/><path d="M363 518.5H1485" stroke="#00ff00" stroke-width="1" stroke-linecap="square"/><path d="M363.5 533.5V518.5" stroke="#00ff00" stroke-width="1" stroke-linecap="square"/><path d="M338 570.5H363" stroke="#ff0000" stroke-width="1"/><path d="M363 555.5H1485" stroke="#00ff00" stroke-width="1" stroke-linecap="square"/><path d="M363.5 570.5V555.5" stroke="#00ff00" stroke-width="1" stroke-linecap="square"/><path d="M338 607.5H363" stroke="#ff0000" stroke-width="1"/><path d="M363 592.5H1485" stroke="#00ff00" stroke-width="1" stroke-linecap="square"/><path d="M363.5 607.5V592.5" stroke="#00ff00" stroke-width="1" stroke-linecap="square"/><path d="M338 644.5H363" stroke="#ff0000" stroke-width="1"/><path d="M363 660.5H1485" stroke="#00ff00" stroke-width="1" stroke-linecap="square"/><path d="M363.5 644.5V660.5" stroke="#00ff00" stroke-width="1" stroke-linecap="square"/><path d="M338 681.5H363" stroke="#ff0000" stroke-width="1"/><path d="M363 666.5H1485" stroke="#00ff00" stroke-width="1" stroke-linecap="square"/><path d="M363.5 681.5V666.5" stroke="#00ff00" stroke-width="1" stroke-linecap="square"/><text x="345.50" y="398.2" fill="#fff" stroke="#fff" stroke-width="0.45" font-family="Liberation Serif" font-size="15.5" >X</text><text x="909.90" y="399" fill="#fff" stroke="#fff" stroke-width="0.45" font-family="Liberation Serif" font-size="18" >2</text><text x="919.90" y="399" fill="#fff" stroke="#fff" stroke-width="0.45" font-family="Liberation Serif" font-size="18" >2</text><text x="929.90" y="399" fill="#fff" stroke="#fff" stroke-width="0.45" font-family="Liberation Serif" font-size="18" >1</text><text x="902.40" y="732" fill="#fff" stroke="#fff" stroke-width="0.45" font-family="Liberation Serif" font-size="18" >1</text><text x="912.40" y="732" fill="#fff" stroke="#fff" stroke-width="0.45" font-family="Liberation Serif" font-size="18" >0</text><path d="M338 181.5H1486" stroke="#fff" stroke-width="1"/><path d="M338.5 165V181M348.5 177V181M358.5 177V181M368.5 177V181M378.5 177V181M388.5 173V181M398.5 177V181M408.5 177V181M418.5 177V181M428.5 177V181M438.5 165V181M448.5 177V181M458.5 177V181M468.5 177V181M478.5 177V181M488.5 173V181M498.5 177V181M508.5 177V181M518.5 177V181M528.5 177V181M538.5 165V181M548.5 177V181M558.5 177V181M568.5 177V181M578.5 177V181M588.5 173V181M598.5 177V181M608.5 177V181M618.5 177V181M628.5 177V181M638.5 165V181M648.5 177V181M658.5 177V181M668.5 177V181M678.5 177V181M688.5 173V181M698.5 177V181M708.5 177V181M718.5 177V181M728.5 177V181M738.5 165V181M748.5 177V181M758.5 177V181M768.5 177V181M778.5 177V181M788.5 173V181M798.5 177V181M808.5 177V181M818.5 177V181M828.5 177V181M838.5 165V181M848.5 177V181M858.5 177V181M868.5 177V181M878.5 177V181M888.5 173V181M898.5 177V181M908.5 177V181M918.5 177V181M928.5 177V181M938.5 165V181M948.5 177V181M958.5 177V181M968.5 177V181M978.5 177V181M988.5 173V181M998.5 177V181M1008.5 177V181M1018.5 177V181M1028.5 177V181M1038.5 165V181M1048.5 177V181M1058.5 177V181M1068.5 177V181M1078.5 177V181M1088.5 173V181M1098.5 177V181M1108.5 177V181M1118.5 177V181M1128.5 177V181M1138.5 165V181M1148.5 177V181M1158.5 177V181M1168.5 177V181M1178.5 177V181M1188.5 173V181M1198.5 177V181M1208.5 177V181M1218.5 177V181M1228.5 177V181M1238.5 165V181M1248.5 177V181M1258.5 177V181M1268.5 177V181M1278.5 177V181M1288.5 173V181M1298.5 177V181M1308.5 177V181M1318.5 177V181M1328.5 177V181M1338.5 165V181M1348.5 177V181M1358.5 177V181M1368.5 177V181M1378.5 177V181M1388.5 173V181M1398.5 177V181M1408.5 177V181M1418.5 177V181M1428.5 177V181M1438.5 165V181M1448.5 177V181M1458.5 177V181M1468.5 177V181M1478.5 177V181" stroke="#fff" stroke-width="1"/><rect x="340" y="161" width="36" height="15" fill="#000"/><text x="340.40" y="175" fill="#fff" stroke="#fff" stroke-width="0.45" font-family="Liberation Serif" font-size="18" >0</text><text x="305.17" y="175" transform="scale(1.18 1)" fill="#fff" stroke="#fff" stroke-width="0.45" font-family="Liberation Serif" font-size="18" >n</text><text x="313.64" y="175" transform="scale(1.18 1)" fill="#fff" stroke="#fff" stroke-width="0.45" font-family="Liberation Serif" font-size="18" >s</text><rect x="440" y="161" width="45" height="15" fill="#000"/><text x="440.40" y="175" fill="#fff" stroke="#fff" stroke-width="0.45" font-family="Liberation Serif" font-size="18" >2</text><text x="450.40" y="175" fill="#fff" stroke="#fff" stroke-width="0.45" font-family="Liberation Serif" font-size="18" >0</text><text x="398.39" y="175" transform="scale(1.18 1)" fill="#fff" stroke="#fff" stroke-width="0.45" font-family="Liberation Serif" font-size="18" >n</text><text x="406.86" y="175" transform="scale(1.18 1)" fill="#fff" stroke="#fff" stroke-width="0.45" font-family="Liberation Serif" font-size="18" >s</text><rect x="540" y="161" width="45" height="15" fill="#000"/><text x="540.40" y="175" fill="#fff" stroke="#fff" stroke-width="0.45" font-family="Liberation Serif" font-size="18" >4</text><text x="550.40" y="175" fill="#fff" stroke="#fff" stroke-width="0.45" font-family="Liberation Serif" font-size="18" >0</text><text x="483.14" y="175" transform="scale(1.18 1)" fill="#fff" stroke="#fff" stroke-width="0.45" font-family="Liberation Serif" font-size="18" >n</text><text x="491.61" y="175" transform="scale(1.18 1)" fill="#fff" stroke="#fff" stroke-width="0.45" font-family="Liberation Serif" font-size="18" >s</text><rect x="640" y="161" width="45" height="15" fill="#000"/><text x="640.40" y="175" fill="#fff" stroke="#fff" stroke-width="0.45" font-family="Liberation Serif" font-size="18" >6</text><text x="650.40" y="175" fill="#fff" stroke="#fff" stroke-width="0.45" font-family="Liberation Serif" font-size="18" >0</text><text x="567.88" y="175" transform="scale(1.18 1)" fill="#fff" stroke="#fff" stroke-width="0.45" font-family="Liberation Serif" font-size="18" >n</text><text x="576.36" y="175" transform="scale(1.18 1)" fill="#fff" stroke="#fff" stroke-width="0.45" font-family="Liberation Serif" font-size="18" >s</text><rect x="740" y="161" width="45" height="15" fill="#000"/><text x="740.40" y="175" fill="#fff" stroke="#fff" stroke-width="0.45" font-family="Liberation Serif" font-size="18" >8</text><text x="750.40" y="175" fill="#fff" stroke="#fff" stroke-width="0.45" font-family="Liberation Serif" font-size="18" >0</text><text x="652.63" y="175" transform="scale(1.18 1)" fill="#fff" stroke="#fff" stroke-width="0.45" font-family="Liberation Serif" font-size="18" >n</text><text x="661.10" y="175" transform="scale(1.18 1)" fill="#fff" stroke="#fff" stroke-width="0.45" font-family="Liberation Serif" font-size="18" >s</text><rect x="840" y="161" width="54" height="15" fill="#000"/><text x="840.40" y="175" fill="#fff" stroke="#fff" stroke-width="0.45" font-family="Liberation Serif" font-size="18" >1</text><text x="850.40" y="175" fill="#fff" stroke="#fff" stroke-width="0.45" font-family="Liberation Serif" font-size="18" >0</text><text x="860.40" y="175" fill="#fff" stroke="#fff" stroke-width="0.45" font-family="Liberation Serif" font-size="18" >0</text><text x="745.85" y="175" transform="scale(1.18 1)" fill="#fff" stroke="#fff" stroke-width="0.45" font-family="Liberation Serif" font-size="18" >n</text><text x="754.32" y="175" transform="scale(1.18 1)" fill="#fff" stroke="#fff" stroke-width="0.45" font-family="Liberation Serif" font-size="18" >s</text><rect x="940" y="161" width="54" height="15" fill="#000"/><text x="940.40" y="175" fill="#fff" stroke="#fff" stroke-width="0.45" font-family="Liberation Serif" font-size="18" >1</text><text x="950.40" y="175" fill="#fff" stroke="#fff" stroke-width="0.45" font-family="Liberation Serif" font-size="18" >2</text><text x="960.40" y="175" fill="#fff" stroke="#fff" stroke-width="0.45" font-family="Liberation Serif" font-size="18" >0</text><text x="830.59" y="175" transform="scale(1.18 1)" fill="#fff" stroke="#fff" stroke-width="0.45" font-family="Liberation Serif" font-size="18" >n</text><text x="839.07" y="175" transform="scale(1.18 1)" fill="#fff" stroke="#fff" stroke-width="0.45" font-family="Liberation Serif" font-size="18" >s</text><rect x="1040" y="161" width="54" height="15" fill="#000"/><text x="1040.40" y="175" fill="#fff" stroke="#fff" stroke-width="0.45" font-family="Liberation Serif" font-size="18" >1</text><text x="1050.40" y="175" fill="#fff" stroke="#fff" stroke-width="0.45" font-family="Liberation Serif" font-size="18" >4</text><text x="1060.40" y="175" fill="#fff" stroke="#fff" stroke-width="0.45" font-family="Liberation Serif" font-size="18" >0</text><text x="915.34" y="175" transform="scale(1.18 1)" fill="#fff" stroke="#fff" stroke-width="0.45" font-family="Liberation Serif" font-size="18" >n</text><text x="923.81" y="175" transform="scale(1.18 1)" fill="#fff" stroke="#fff" stroke-width="0.45" font-family="Liberation Serif" font-size="18" >s</text><rect x="1140" y="161" width="54" height="15" fill="#000"/><text x="1140.40" y="175" fill="#fff" stroke="#fff" stroke-width="0.45" font-family="Liberation Serif" font-size="18" >1</text><text x="1150.40" y="175" fill="#fff" stroke="#fff" stroke-width="0.45" font-family="Liberation Serif" font-size="18" >6</text><text x="1160.40" y="175" fill="#fff" stroke="#fff" stroke-width="0.45" font-family="Liberation Serif" font-size="18" >0</text><text x="1000.08" y="175" transform="scale(1.18 1)" fill="#fff" stroke="#fff" stroke-width="0.45" font-family="Liberation Serif" font-size="18" >n</text><text x="1008.56" y="175" transform="scale(1.18 1)" fill="#fff" stroke="#fff" stroke-width="0.45" font-family="Liberation Serif" font-size="18" >s</text><rect x="1240" y="161" width="54" height="15" fill="#000"/><text x="1240.40" y="175" fill="#fff" stroke="#fff" stroke-width="0.45" font-family="Liberation Serif" font-size="18" >1</text><text x="1250.40" y="175" fill="#fff" stroke="#fff" stroke-width="0.45" font-family="Liberation Serif" font-size="18" >8</text><text x="1260.40" y="175" fill="#fff" stroke="#fff" stroke-width="0.45" font-family="Liberation Serif" font-size="18" >0</text><text x="1084.83" y="175" transform="scale(1.18 1)" fill="#fff" stroke="#fff" stroke-width="0.45" font-family="Liberation Serif" font-size="18" >n</text><text x="1093.31" y="175" transform="scale(1.18 1)" fill="#fff" stroke="#fff" stroke-width="0.45" font-family="Liberation Serif" font-size="18" >s</text><rect x="1340" y="161" width="54" height="15" fill="#000"/><text x="1340.40" y="175" fill="#fff" stroke="#fff" stroke-width="0.45" font-family="Liberation Serif" font-size="18" >2</text><text x="1350.40" y="175" fill="#fff" stroke="#fff" stroke-width="0.45" font-family="Liberation Serif" font-size="18" >0</text><text x="1360.40" y="175" fill="#fff" stroke="#fff" stroke-width="0.45" font-family="Liberation Serif" font-size="18" >0</text><text x="1169.58" y="175" transform="scale(1.18 1)" fill="#fff" stroke="#fff" stroke-width="0.45" font-family="Liberation Serif" font-size="18" >n</text><text x="1178.05" y="175" transform="scale(1.18 1)" fill="#fff" stroke="#fff" stroke-width="0.45" font-family="Liberation Serif" font-size="18" >s</text><rect x="1440" y="161" width="54" height="15" fill="#000"/><text x="1440.40" y="175" fill="#fff" stroke="#fff" stroke-width="0.45" font-family="Liberation Serif" font-size="18" >2</text><text x="1450.40" y="175" fill="#fff" stroke="#fff" stroke-width="0.45" font-family="Liberation Serif" font-size="18" >2</text><text x="1460.40" y="175" fill="#fff" stroke="#fff" stroke-width="0.45" font-family="Liberation Serif" font-size="18" >0</text><text x="1254.32" y="175" transform="scale(1.18 1)" fill="#fff" stroke="#fff" stroke-width="0.45" font-family="Liberation Serif" font-size="18" >n</text><text x="1262.80" y="175" transform="scale(1.18 1)" fill="#fff" stroke="#fff" stroke-width="0.45" font-family="Liberation Serif" font-size="18" >s</text><rect x="512" y="113" width="2" height="885" fill="#ffff00"/><svg x="512" y="97" width="86" height="16"><rect x="0" y="0" width="86" height="16" fill="#ffff00"/><path d="M0.5 16V0.5H86M0 15.5H86" stroke="#fff" stroke-width="1" fill="none"/><text x="2.60" y="18" fill="#000" stroke="#000" stroke-width="0.45" font-family="Liberation Serif" font-size="18" >3</text><text x="12.60" y="18" fill="#000" stroke="#000" stroke-width="0.45" font-family="Liberation Serif" font-size="18" >5</text><text x="22.60" y="18" fill="#000" stroke="#000" stroke-width="0.45" font-family="Liberation Serif" font-size="18" >.</text><text x="32.60" y="18" fill="#000" stroke="#000" stroke-width="0.45" font-family="Liberation Serif" font-size="18" >0</text><text x="42.60" y="18" fill="#000" stroke="#000" stroke-width="0.45" font-family="Liberation Serif" font-size="18" >0</text><text x="52.60" y="18" fill="#000" stroke="#000" stroke-width="0.45" font-family="Liberation Serif" font-size="18" >0</text><text x="61.27" y="18" transform="scale(1.18 1)" fill="#000" stroke="#000" stroke-width="0.45" font-family="Liberation Serif" font-size="18" >n</text><text x="69.75" y="18" transform="scale(1.18 1)" fill="#000" stroke="#000" stroke-width="0.45" font-family="Liberation Serif" font-size="18" >s</text></svg></g></svg>
<div class="a" style="left:1386px;top:1031px;font-size:15.5px;line-height:20px;color:rgba(105,105,105,0.85);white-space:nowrap;transform:scaleX(0.9);transform-origin:0 0;text-shadow:1px 0 0 rgba(255,255,255,.8),-1px 0 0 rgba(255,255,255,.8),0 1px 0 rgba(255,255,255,.8),0 -1px 0 rgba(255,255,255,.8)">CSDN @罗娜mei</div>
</body></html>
